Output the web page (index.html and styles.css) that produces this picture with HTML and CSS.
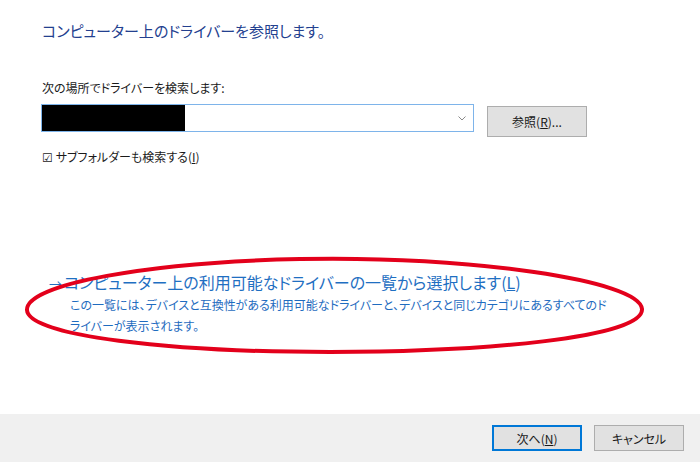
FILE: index.html
```html
<!DOCTYPE html>
<html lang="ja">
<head>
  <meta charset="UTF-8">
  <link rel="stylesheet" href="styles.css">
  <title>ドライバーの更新</title>
</head>
<body>
  <div id="wizard">
    <div class="content">
      <h1 class="title">コンピューター上のドライバーを参照します。</h1>

      <div class="label">次の場所でドライバーを検索します:</div>
      <div class="path-row">
        <div class="path-box">
          <div class="redacted"></div>
          <span class="chevron">
            <svg width="8" height="5" viewBox="0 0 8 5"><path d="M0.5 0.5 L4 4 L7.5 0.5" fill="none" stroke="#8a8a8a" stroke-width="1"/></svg>
          </span>
        </div>
        <button class="btn browse">参照(<u>R</u>)...</button>
      </div>
      <div class="check">☑ サブフォルダーも検索する(<u>I</u>)</div>

      <div class="pick">
        <div class="pick-link"><span class="arrow">→</span>コンピューター上の利用可能なドライバーの一覧から選択します(<u>L</u>)</div>
        <div class="pick-desc">この一覧には、デバイスと互換性がある利用可能なドライバーと、デバイスと同じカテゴリにあるすべてのド<br>ライバーが表示されます。</div>
      </div>
    </div>

    <div class="footer">
      <button class="btn primary">次へ(<u>N</u>)</button>
      <button class="btn">キャンセル</button>
    </div>

    <svg class="mark" width="700" height="462" viewBox="0 0 700 462">
      <path d="M300 259 C470 256 640 280 642 309 C644 338 480 352 330 352 C170 352 28 336 27 310 C26 284 150 262 300 259 Z"
            fill="none" stroke="#e3001b" stroke-width="4"/>
    </svg>
  </div>
</body>
</html>
```

FILE: styles.css
```css
body {
  margin: 0;
  background: #ffffff;
  font-family: "Noto Sans CJK JP", "Noto Sans", sans-serif;
  font-feature-settings: "palt";
}

#wizard {
  position: relative;
  width: 700px;
  height: 462px;
  display: flex;
  flex-direction: column;
  overflow: hidden;
}

.content {
  flex: 1;
  padding: 0 0 0 42px;
}

.title {
  margin: 20px 0 0 0;
  font-size: 15px;
  font-weight: normal;
  line-height: 22px;
  color: #23408f;
}

.label {
  margin-top: 38px;
  font-size: 12px;
  line-height: 16px;
  color: #1a1a1a;
}

.path-row {
  display: flex;
  align-items: flex-start;
  margin-top: 8px;
}

.path-box {
  width: 431px;
  height: 26px;
  border: 1px solid #7eb4ea;
  display: flex;
  align-items: stretch;
  margin-left: -1px;
}

.redacted {
  width: 143px;
  background: #000000;
}

.chevron {
  margin-left: auto;
  width: 22px;
  display: flex;
  align-items: center;
  justify-content: center;
}

.btn {
  font-family: inherit;
  font-feature-settings: "palt";
  font-size: 12px;
  color: #1a1a1a;
  background: #e1e1e1;
  border: 1px solid #adadad;
  padding: 0;
  cursor: pointer;
}

.browse {
  width: 100px;
  height: 31px;
  margin: 2px 0 0 13px;
}

.check {
  margin-top: 12px;
  font-size: 12px;
  line-height: 16px;
  color: #1a1a1a;
}

.pick {
  margin-top: 107px;
}

.pick-link {
  font-size: 16px;
  line-height: 20px;
  color: #1f6fc2;
  margin-left: 7px;
}

.arrow {
  display: inline-block;
  width: 15px;
  font-size: 13px;
}

.pick-desc {
  margin: 0 0 0 28px;
  font-size: 12px;
  line-height: 21px;
  color: #1f6cc0;
}

.footer {
  height: 48px;
  background: #f0f0f0;
  display: flex;
  justify-content: flex-end;
  align-items: flex-start;
  gap: 12px;
  padding: 11px 16px 0 0;
  box-sizing: border-box;
}

.footer .btn {
  width: 90px;
  height: 26px;
}

.footer .primary {
  border: 1px solid #0078d7;
  box-shadow: inset 0 0 0 1px #0078d7;
}

.mark {
  position: absolute;
  left: 0;
  top: 0;
  pointer-events: none;
}
```
